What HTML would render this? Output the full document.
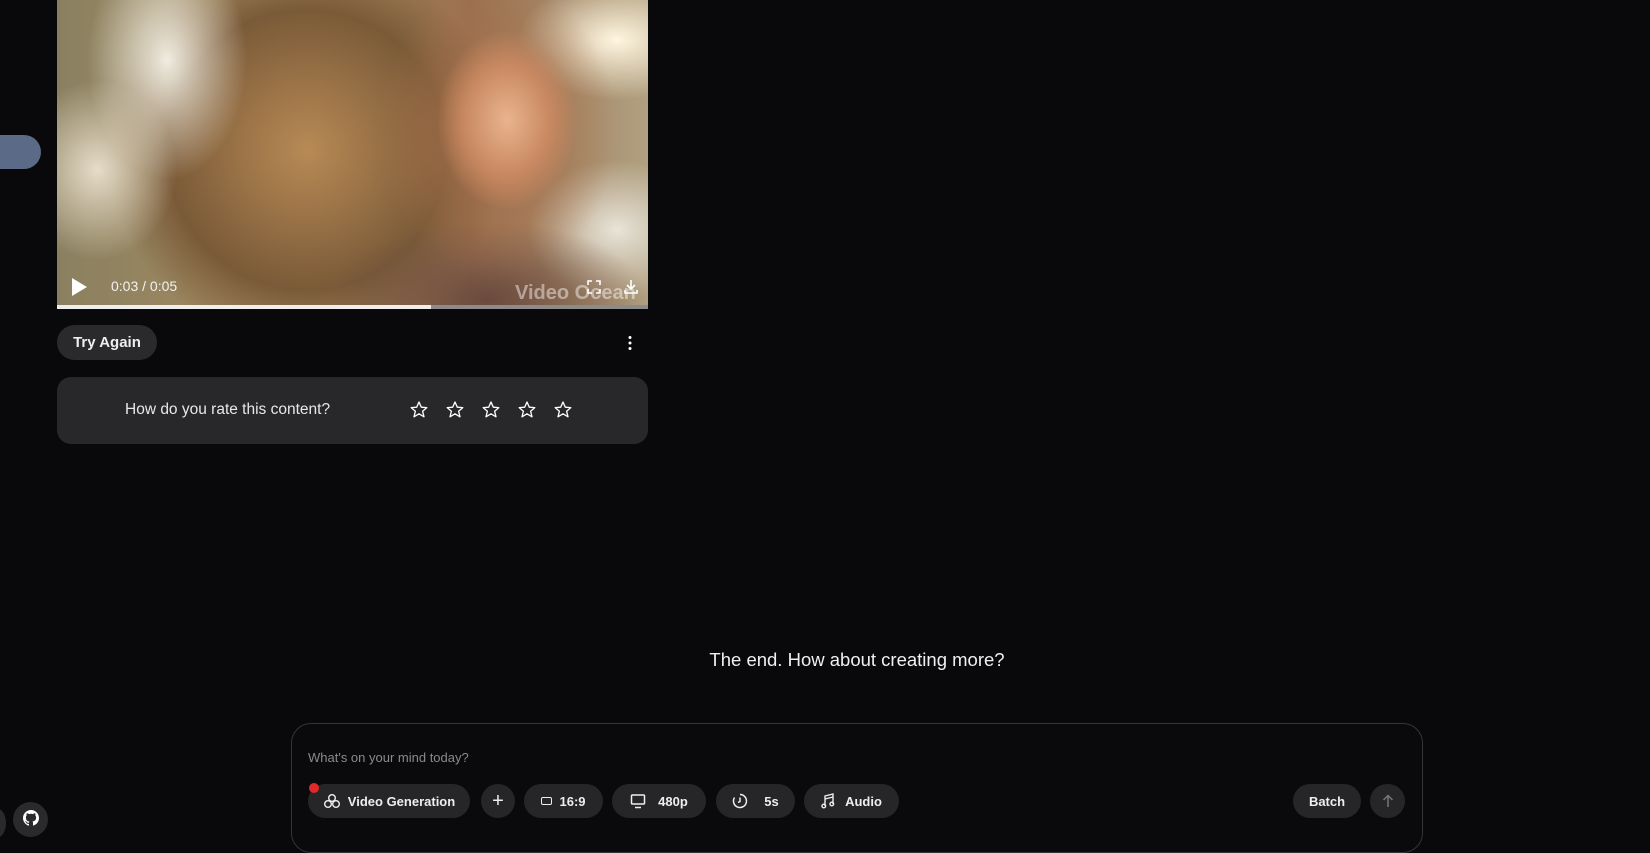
<!DOCTYPE html>
<html><head><meta charset="utf-8"><style>
*{margin:0;padding:0;box-sizing:border-box}
body{width:1650px;height:825px;background:#09090c;overflow:hidden;position:relative;font-family:"Liberation Sans",sans-serif;color:#eee}
.abs{position:absolute}
.video{left:57px;top:0;width:591px;height:308px;overflow:hidden;
background:
radial-gradient(ellipse 70px 90px at 450px 120px,#e9b48e 0%,#c98962 60%,rgba(0,0,0,0) 100%),
radial-gradient(ellipse 120px 150px at 440px 130px,#a8704a 0%,rgba(120,80,50,0) 100%),
radial-gradient(ellipse 160px 80px at 430px 300px,#6b4a3e 0%,rgba(0,0,0,0) 100%),
radial-gradient(ellipse 90px 70px at 560px 230px,#e8e4d8 0%,rgba(0,0,0,0) 100%),
radial-gradient(ellipse 100px 60px at 560px 40px,#fff6e0 0%,rgba(0,0,0,0) 100%),
radial-gradient(ellipse 80px 120px at 110px 60px,#f0ece0 0%,rgba(0,0,0,0) 100%),
radial-gradient(ellipse 80px 90px at 40px 170px,#e6dcc8 0%,rgba(0,0,0,0) 100%),
radial-gradient(ellipse 200px 200px at 250px 150px,#b88a55 0%,#7a5a38 70%,rgba(0,0,0,0) 100%),
linear-gradient(90deg,#8a8060,#a88c60 40%,#9a7050 70%,#b0a080);}
.bar{left:57px;top:305px;width:591px;height:4px;background:#8b8b8b}
.bar i{position:absolute;left:0;top:0;width:374px;height:4px;background:#eee}
.pill{border-radius:999px;background:#262629;display:flex;align-items:center;justify-content:center;font-size:13px;font-weight:bold;color:#eee;height:34px;top:784px}
</style></head><body>
<div class="abs" style="left:-20px;top:135px;width:61px;height:34px;border-radius:17px;background:#5b6b87"></div>
<div class="abs video"></div>
<svg class="abs" style="left:70px;top:277px" width="18" height="20"><path d="M2 1 L17 10 L2 19Z" fill="#fff"/></svg>
<div class="abs" style="left:111px;top:278px;font-size:14px;color:#f2f2f2">0:03 / 0:05</div>
<div class="abs" style="left:515px;top:282px;font-size:20px;font-weight:bold;color:rgba(255,255,255,.45)">Video Ocean</div>
<svg class="abs" style="left:587px;top:280px" width="14" height="14" fill="none" stroke="#fff" stroke-width="1.6"><path d="M1 5V1H5M9 1H13V5M13 9V13H9M5 13H1V9"/></svg>
<svg class="abs" style="left:624px;top:279px" width="14" height="15" fill="none" stroke="#fff" stroke-width="1.6"><path d="M7 1V10M3 6L7 10L11 6M1 11V14H13V11"/></svg>
<div class="abs bar"><i></i></div>
<div class="abs" style="left:57px;top:325px;width:100px;height:35px;border-radius:18px;background:#2a2a2d;font-size:15px;font-weight:bold;display:flex;align-items:center;justify-content:center">Try Again</div>
<svg class="abs" style="left:627px;top:335px" width="6" height="16" fill="#fff"><circle cx="3" cy="2.5" r="1.5"/><circle cx="3" cy="8" r="1.5"/><circle cx="3" cy="13.5" r="1.5"/></svg>
<div class="abs" style="left:57px;top:377px;width:591px;height:67px;border-radius:14px;background:#28282a"></div>
<div class="abs" style="left:125px;top:401px;font-size:15.5px;color:#e8e8e8">How do you rate this content?</div>
<svg class="abs" style="left:408px;top:400px" width="170" height="20" fill="none" stroke="#fff" stroke-width="1.3" stroke-linejoin="round">
<defs><path id="s" d="M10 2L12.3 7.2L17.8 7.6L13.6 11.2L15 16.8L10 13.8L5 16.8L6.4 11.2L2.2 7.6L7.7 7.2Z"/></defs>
<use href="#s" x="1"/><use href="#s" x="37"/><use href="#s" x="73"/><use href="#s" x="109"/><use href="#s" x="145"/></svg>
<div class="abs" style="left:0;width:1714px;top:649px;text-align:center;font-size:18.5px;color:#f0f0f0">The end. How about creating more?</div>
<div class="abs" style="left:291px;top:723px;width:1132px;height:130px;border:1px solid #34343a;border-radius:20px;background:#0a0a0d"></div>
<div class="abs" style="left:308px;top:750px;font-size:13px;color:#8a8a8e">What's on your mind today?</div>
<div class="abs pill" style="left:308px;width:162px"><svg width="18" height="16" style="margin-right:7px" fill="none" stroke="#eee" stroke-width="1.4"><circle cx="9" cy="5" r="3.3"/><circle cx="5" cy="11" r="3.3"/><circle cx="13" cy="11" r="3.3"/></svg>Video Generation</div>
<div class="abs" style="left:309px;top:783px;width:10px;height:10px;border-radius:50%;background:#e02a2a"></div>
<div class="abs pill" style="left:481px;width:34px;font-size:20px;font-weight:normal">+</div>
<div class="abs pill" style="left:524px;width:79px"><span style="display:inline-block;width:11px;height:8px;border:1.4px solid #eee;border-radius:2px;margin-right:7px"></span>16:9</div>
<div class="abs pill" style="left:612px;width:94px"><svg width="16" height="15" style="margin-right:12px" fill="none" stroke="#eee" stroke-width="1.5"><rect x="1.5" y="1" width="13" height="9" rx="1"/><path d="M5 13.5H11"/></svg>480p</div>
<div class="abs pill" style="left:716px;width:79px"><svg width="16" height="16" style="margin-right:16px" fill="none" stroke="#eee" stroke-width="1.5"><path d="M8 1.5A6.5 6.5 0 1 1 2.5 4.5"/><path d="M8 4.5V8.5L6 9.5"/></svg>5s</div>
<div class="abs pill" style="left:804px;width:95px"><svg width="14" height="16" style="margin-right:10px" fill="none" stroke="#eee" stroke-width="1.4"><path d="M4 13V3L12 1V11"/><circle cx="2.8" cy="13" r="1.8"/><circle cx="10.8" cy="11" r="1.8"/><path d="M4 6L12 4"/></svg>Audio</div>
<div class="abs pill" style="left:1293px;width:68px">Batch</div>
<div class="abs pill" style="left:1370px;width:35px"><svg width="12" height="14" fill="none" stroke="#777" stroke-width="1.5"><path d="M6 13V1.5M1.5 6L6 1.5L10.5 6"/></svg></div>
<div class="abs" style="left:13px;top:802px;width:35px;height:35px;border-radius:50%;background:#2a2a2d;display:flex;align-items:flex-start;justify-content:center;padding-top:8px"><svg width="16" height="16" viewBox="0 0 16 16" fill="#fff"><path d="M8 0C3.6 0 0 3.6 0 8c0 3.5 2.3 6.5 5.5 7.6.4.1.5-.2.5-.4v-1.4c-2.2.5-2.7-1-2.7-1-.4-.9-.9-1.2-.9-1.2-.7-.5.1-.5.1-.5.8.1 1.2.8 1.2.8.7 1.2 1.9.9 2.3.7.1-.5.3-.9.5-1.1-1.8-.2-3.6-.9-3.6-4 0-.9.3-1.6.8-2.1-.1-.2-.4-1 .1-2.1 0 0 .7-.2 2.2.8.6-.2 1.3-.3 2-.3s1.4.1 2 .3c1.5-1 2.2-.8 2.2-.8.4 1.1.2 1.9.1 2.1.5.6.8 1.3.8 2.1 0 3.1-1.9 3.7-3.6 3.9.3.3.5.8.5 1.5v2.2c0 .2.1.5.6.4C13.7 14.5 16 11.5 16 8c0-4.4-3.6-8-8-8z"/></svg></div>
<div class="abs" style="left:-14px;top:808px;width:20px;height:30px;border-radius:50%;background:#2a2a2d"></div>
</body></html>
